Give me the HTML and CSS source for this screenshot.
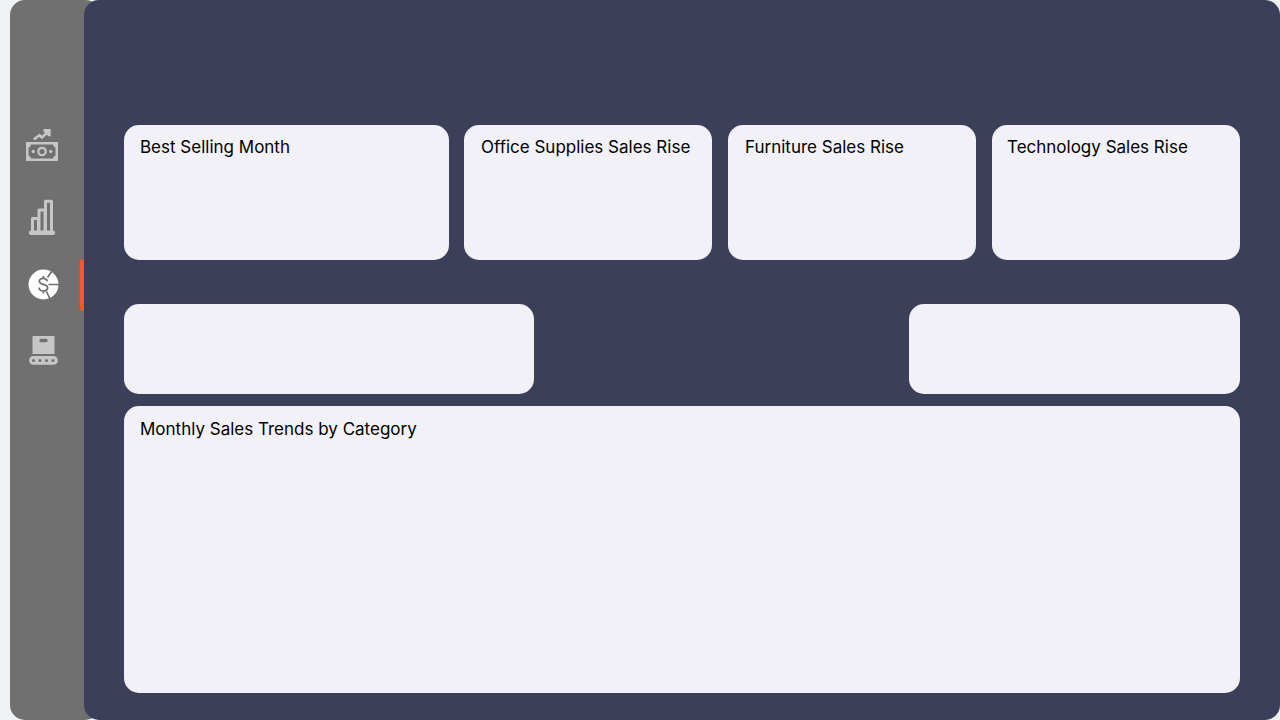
FILE: index.html
```html
<!DOCTYPE html>
<html lang="en">
<head>
<meta charset="utf-8">
<title>Sales Dashboard</title>
<link rel="stylesheet" href="styles.css">
</head>
<body>
<div class="app">
  <nav class="sidebar">
    <a class="nav-item">
      <svg class="icon" width="34" height="34" viewBox="0 0 34 34">
        <path class="fill" fill-rule="evenodd" d="M1 14H33V33H1ZM6 16.5Q5.5 19 3.5 19.5V27.5Q5.500 28 6 30.500H28Q28.500 28 30.500 27.500V19.500Q28.500 19 28 16.500Z"/>
        <circle class="line" cx="17" cy="23.500" r="3.700" stroke-width="2.300"/>
        <circle class="fill" cx="8.300" cy="23.500" r="1.700"/><circle class="fill" cx="25.700" cy="23.500" r="1.700"/>
        <path class="line" d="M8.800 11.400L14.500 7.200L17 9.500L23.500 3.300" stroke-width="2.600"/>
        <path class="fill" d="M18.500 1H25.700V8.200H23.400L18.500 3.300Z"/>
      </svg>
    </a>
    <a class="nav-item">
      <svg class="icon" width="34" height="38" viewBox="0 0 34 38">
        <rect class="fill" x="4" y="32.500" width="26" height="4.500" rx="1.700"/>
        <path class="line" d="M7.500 34V20.500H13M14 34V12H19.500M20.500 34V3.200H26.500V34M13.500 20V34M20 12V34" stroke-width="3" stroke-linejoin="round"/>
      </svg>
    </a>
    <a class="nav-item active">
      <svg class="icon" width="34" height="34" viewBox="0 0 34 34">
        <circle class="fill" cx="18.500" cy="16.500" r="15"/>
        <g class="cut" transform="translate(0 -1)">
          <path d="M22.500 10.500L28 2.500M23.500 17.500H34M21.500 24.500L25.500 33" stroke-width="1.700"/>
          <path d="M22.400 14.200C21.800 11.900 20.200 11.300 18.300 11.300C15.800 11.300 14.300 12.500 14.300 14.300C14.300 18.400 22.600 16.300 22.600 20.700C22.600 22.900 20.600 24 18.300 24C15.800 24 14.200 22.900 13.900 20.700M18.300 8.700V11.300M18.300 24V26.600" stroke-width="1.700"/>
        </g>
      </svg>
    </a>
    <a class="nav-item">
      <svg class="icon" width="34" height="32" viewBox="0 0 34 32">
        <path class="fill" fill-rule="evenodd" d="M7.500 1H29.500V19H7.500ZM16 3.800A1.700 1.700 0 0 0 16 7.200H21A1.700 1.700 0 0 0 21 3.800ZM8.500 21H28.500A4.400 4.400 0 0 1 28.500 29.800H8.500A4.400 4.400 0 0 1 8.500 21Z"/>
        <g class="hole"><circle cx="8.500" cy="25.400" r="1.500"/><circle cx="15" cy="25.400" r="1.500"/><circle cx="21.500" cy="25.400" r="1.500"/><circle cx="28" cy="25.400" r="1.500"/></g>
      </svg>
    </a>
  </nav>
  <main class="board">
    <section class="kpis">
      <article class="card best"><h2>Best Selling Month</h2></article>
      <article class="card office"><h2>Office Supplies Sales Rise</h2></article>
      <article class="card furniture"><h2>Furniture Sales Rise</h2></article>
      <article class="card technology"><h2>Technology Sales Rise</h2></article>
    </section>
    <section class="filters">
      <div class="card filter-main"></div>
      <div class="card filter-side"></div>
    </section>
    <section class="card trends"><h2>Monthly Sales Trends by Category</h2></section>
  </main>
</div>
</body>
</html>
```

FILE: styles.css
```css
* { box-sizing: border-box; }
body { margin: 0; background: #eef2f4; font-family: Inter, sans-serif; color: #000; }
.app { display: flex; height: 720px; padding-left: 10px; overflow: hidden; }
.sidebar { width: 90px; flex: none; padding: 120px 16px 0 0; background: #707070; border-radius: 15px; }
.nav-item { position: relative; display: flex; height: 50px; margin-bottom: 22px; padding-left: 15px; align-items: center; color: #c6c6c6; }
.nav-item:nth-child(2) { margin-bottom: 18px; }
.nav-item.active { margin-bottom: 16px; color: #fff; }
.nav-item.active::after { content: ""; position: absolute; right: 0; top: 0; width: 4.500px; height: 50px; background: #ff5429; box-shadow: 0 0 2px #ff5429; }
.icon { display: block; }
.fill { fill: currentColor; }
.line { fill: none; stroke: currentColor; }
.cut { fill: none; stroke: #707070; }
.hole { fill: #707070; }
.board { position: relative; flex: 1; min-width: 0; margin-left: -16px; padding: 125px 40px 27px; background: #3c3f5a; border-radius: 15px; }
.card { background: #f2f1f8; border-radius: 15px; }
.kpis { display: grid; grid-template-columns: 324px 248px 248px 248px; column-gap: 16px; height: 135px; }
.best { margin-right: -1px; }
.card h2 { margin: 0; padding: 11px 0 0 16px; font-size: 17px; line-height: 22px; font-weight: 400; white-space: nowrap; }
.office h2, .furniture h2 { padding-left: 17px; }
.technology h2 { padding-left: 15px; }
.filters { display: flex; justify-content: space-between; height: 90px; margin-top: 44px; }
.filter-main { width: 410px; }
.filter-side { width: 331px; }
.trends { height: 287px; margin-top: 12px; }
.trends h2 { padding-top: 12px; }
```
